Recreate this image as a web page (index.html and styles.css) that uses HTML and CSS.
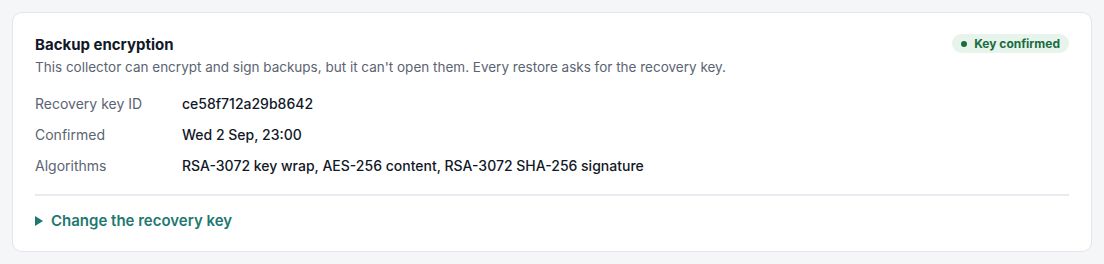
FILE: index.html
```html
<!DOCTYPE html>
<html lang="en">
<head>
    <meta charset="UTF-8">
    <meta name="viewport" content="width=device-width, initial-scale=1.0">
    <title>Backup encryption</title>
    <link rel="stylesheet" href="styles.css">
</head>
<body>

<div class="card">
    <div class="card-head">
        <div>
            <h2>Backup encryption</h2>
            <p class="lead">This collector can encrypt and sign backups, but it can't open them. Every restore asks for the recovery key.</p>
        </div>
        <span class="badge"><span class="dot"></span>Key confirmed</span>
    </div>

    <dl class="details">
        <dt>Recovery key ID</dt>
        <dd>ce58f712a29b8642</dd>
        <dt>Confirmed</dt>
        <dd>Wed 2 Sep, 23:00</dd>
        <dt>Algorithms</dt>
        <dd>RSA-3072 key wrap, AES-256 content, RSA-3072 SHA-256 signature</dd>
    </dl>

    <details class="change">
        <summary>Change the recovery key</summary>
    </details>
</div>

</body>
</html>
```

FILE: styles.css
```css
body {
    font-family: Inter, "Noto Sans", Arial, sans-serif;
    background-color: #f5f6f8;
    color: #111827;
    margin: 0;
    padding: 12px;
}

.card {
    background: #fff;
    border: 1px solid #e3e6ea;
    border-radius: 10px;
    padding: 21px 22px 19px;
}

.card-head {
    display: flex;
    justify-content: space-between;
    align-items: flex-start;
}

h2 {
    margin: 0;
    font-size: 15px;
    line-height: 22px;
    font-weight: 700;
    color: #111827;
}

.lead {
    margin: 2px 0 0;
    font-size: 13.5px;
    line-height: 19px;
    color: #5b6472;
}

.badge {
    display: inline-flex;
    align-items: center;
    gap: 7px;
    padding: 2px 9px;
    background: #e7f4ec;
    color: #1b6b3f;
    border-radius: 10px;
    font-size: 12px;
    line-height: 15px;
    font-weight: 700;
}

.dot {
    width: 6px;
    height: 6px;
    border-radius: 50%;
    background: #1b6b3f;
}

.details {
    display: grid;
    grid-template-columns: 147px 1fr;
    row-gap: 11px;
    margin: 17px 0 0;
    padding-bottom: 18px;
    border-bottom: 2px solid #e8ebef;
    font-size: 14px;
    line-height: 20px;
}

.details dt {
    color: #5b6472;
}

.details dd {
    margin: 0;
    font-weight: 500;
    color: #111827;
}

.change {
    margin-top: 14px;
}

.change summary {
    display: flex;
    align-items: center;
    gap: 8px;
    list-style: none;
    cursor: pointer;
    font-size: 15px;
    line-height: 22px;
    font-weight: 600;
    color: #1e7870;
}

.change summary::-webkit-details-marker {
    display: none;
}

.change summary::before {
    content: "";
    border-left: 8px solid #1e7870;
    border-top: 5px solid transparent;
    border-bottom: 5px solid transparent;
}
```
